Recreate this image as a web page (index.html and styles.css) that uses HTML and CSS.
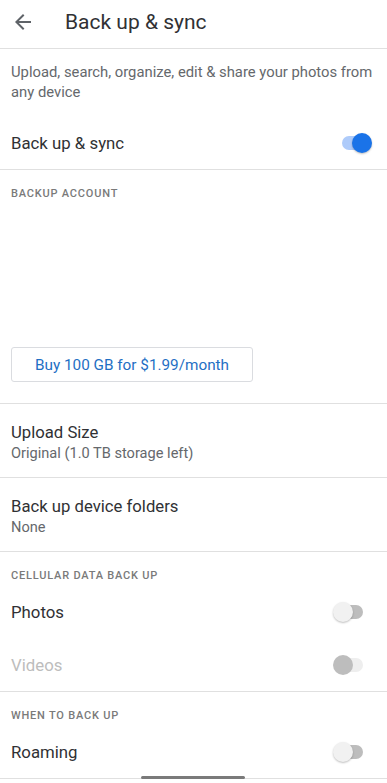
FILE: index.html
```html
<!DOCTYPE html>
<html lang="en">
<head>
    <meta charset="UTF-8">
    <meta name="viewport" content="width=device-width, initial-scale=1.0">
    <title>Back up &amp; sync</title>
    <link rel="stylesheet" href="styles.css">
</head>
<body>
    <header class="app-bar">
        <svg class="back" width="24" height="24" viewBox="0 0 24 24">
            <path d="M20 11H7.83l5.59-5.59L12 4l-8 8 8 8 1.41-1.41L7.83 13H20v-2z" fill="#5f6368"/>
        </svg>
        <h1>Back up &amp; sync</h1>
    </header>

    <p class="intro">Upload, search, organize, edit &amp; share your photos from any device</p>

    <div class="row row-top">
        <span class="row-label">Back up &amp; sync</span>
        <span class="switch on"></span>
    </div>

    <section class="block">
        <div class="section-title">Backup account</div>
        <div class="account"></div>
        <button class="buy">Buy 100 GB for $1.99/month</button>
    </section>

    <div class="item">
        <div class="item-title">Upload Size</div>
        <div class="item-sub">Original (1.0 TB storage left)</div>
    </div>

    <div class="item">
        <div class="item-title">Back up device folders</div>
        <div class="item-sub">None</div>
    </div>

    <section class="block">
        <div class="section-title">Cellular data back up</div>
        <div class="row">
            <span class="row-label">Photos</span>
            <span class="switch"></span>
        </div>
        <div class="row">
            <span class="row-label disabled">Videos</span>
            <span class="switch off-disabled"></span>
        </div>
    </section>

    <section class="block">
        <div class="section-title">When to back up</div>
        <div class="row">
            <span class="row-label">Roaming</span>
            <span class="switch"></span>
        </div>
    </section>

    <div class="home-bar"></div>
</body>
</html>
```

FILE: styles.css
```css
body {
    margin: 0;
    background: #fff;
    font-family: Roboto, "Noto Sans", sans-serif;
    color: #303134;
}
.app-bar {
    display: flex;
    align-items: center;
    height: 48px;
    border-bottom: 1px solid #e0e0e0;
}
.back {
    margin-left: 11px;
    margin-top: -4px;
}
.app-bar h1 {
    margin: -4px 0 0 30px;
    font-size: 21px;
    font-weight: 400;
    color: #303134;
}
.intro {
    margin: 0;
    padding: 13px 10px 14px 11px;
    font-size: 14.8px;
    line-height: 20px;
    color: #65686c;
}
.row {
    display: flex;
    align-items: center;
    justify-content: space-between;
    height: 53px;
    padding: 0 22px 0 11px;
}
.row-top {
    padding-right: 15px;
    border-bottom: 1px solid #e0e0e0;
}
.row-label {
    font-size: 16.8px;
}
.row-label.disabled {
    color: #bdbdbd;
}
.block {
    border-bottom: 1px solid #e0e0e0;
}
.section-title {
    padding: 16px 11px 1px;
    font-size: 11px;
    line-height: 16px;
    font-weight: 500;
    letter-spacing: 0.8px;
    text-transform: uppercase;
    color: #7a7a7a;
}
.account {
    height: 144px;
}
.buy {
    display: block;
    width: 242px;
    height: 35px;
    margin: 0 0 21px 11px;
    background: #fff;
    border: 1px solid #dadce0;
    border-radius: 3px;
    font-family: inherit;
    font-size: 15.3px;
    color: #1f6fc4;
}
.item {
    padding: 19px 11px 14px;
    border-bottom: 1px solid #e0e0e0;
}
.item-title {
    font-size: 16.7px;
    line-height: 20px;
}
.item-sub {
    font-size: 14.6px;
    line-height: 20px;
    color: #65686c;
}
.switch {
    position: relative;
    width: 32px;
    height: 20px;
}
.switch::before {
    content: "";
    position: absolute;
    left: 2px;
    right: 2px;
    top: 3px;
    height: 14px;
    border-radius: 7px;
    background: #bdbdbd;
}
.switch::after {
    content: "";
    position: absolute;
    left: 0;
    top: 0;
    width: 20px;
    height: 20px;
    border-radius: 50%;
    background: #f1f1f1;
    box-shadow: 0 1px 2px rgba(0,0,0,0.25);
}
.switch.on::before {
    background: #aecbfa;
}
.switch.on::after {
    left: auto;
    right: 0;
    background: #1a73e8;
}
.switch.off-disabled::before {
    background: #eeeeee;
}
.switch.off-disabled::after {
    background: #bdbdbd;
    box-shadow: none;
}
.home-bar {
    position: fixed;
    left: 141px;
    bottom: 4px;
    width: 104px;
    height: 3px;
    border-radius: 2px;
    background: #7a7a7a;
}
```
